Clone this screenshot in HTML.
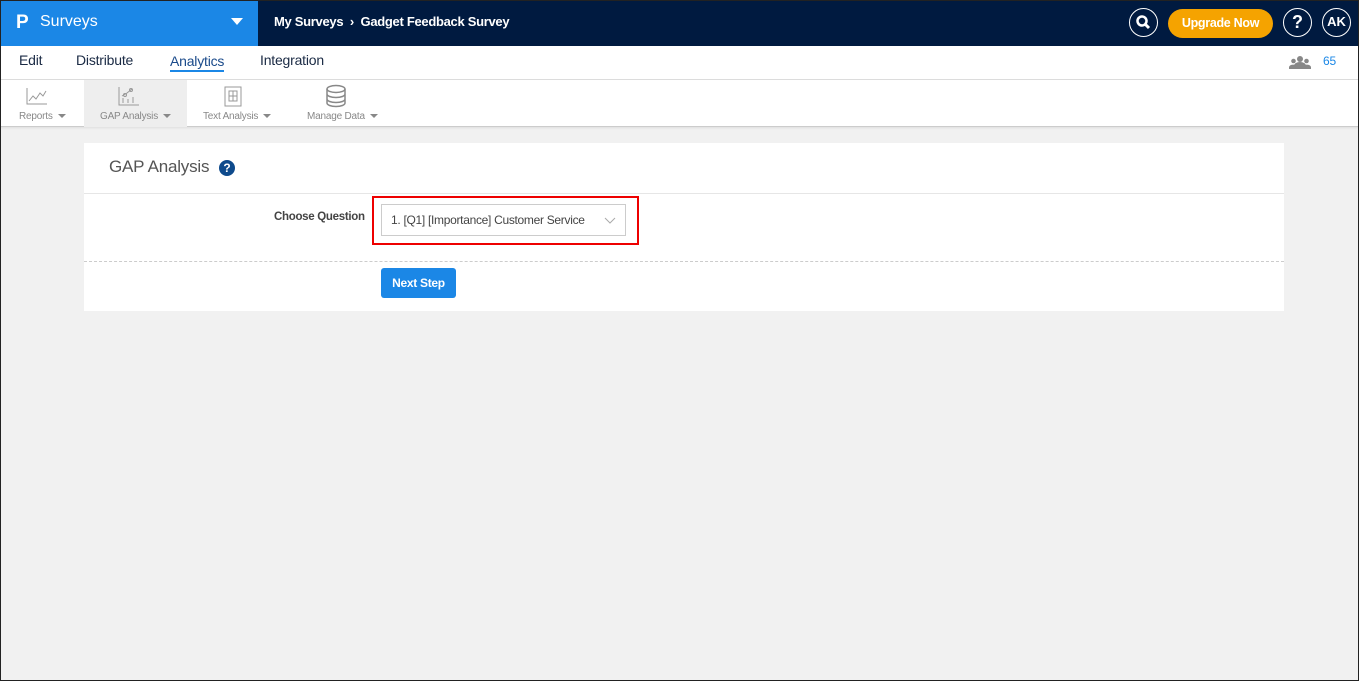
<!DOCTYPE html>
<html><head><meta charset="utf-8"><style>
*{box-sizing:border-box;margin:0;padding:0}
body{width:1359px;height:681px;overflow:hidden;background:#f1f1f1;font-family:"Liberation Sans",sans-serif;position:relative}
.abs{position:absolute}
.top{left:0;top:0;width:1359px;height:46px;background:#001a40}
.brand{left:0;top:0;width:258px;height:46px;background:#1b87e6;color:#fff}
.nav{left:0;top:46px;width:1359px;height:34px;background:#fff;border-bottom:1px solid #ddd}
.nav span{position:absolute;top:6px;font-size:14px;color:#1a2a44;letter-spacing:-0.2px}
.tool{left:0;top:80px;width:1359px;height:47px;background:#fff;border-bottom:1px solid #ccc;box-shadow:0 1px 2px #ddd}
.tl{position:absolute;top:31px;font-size:10px;color:#888;letter-spacing:-0.2px}
.car{display:inline-block;border-left:4px solid transparent;border-right:4px solid transparent;border-top:4px solid #888;margin-left:5px;vertical-align:middle}
.card{left:84px;top:143px;width:1200px;height:168px;background:#fff}
.frame{left:0;top:0;width:1359px;height:681px;border:1px solid #222;pointer-events:none}
</style></head><body>
<div class="abs top"></div>
<div class="abs brand">
 <div class="abs" style="left:16px;top:12px;font-size:19px;font-weight:bold">P</div>
 <div class="abs" style="left:40px;top:13px;font-size:16px">Surveys</div>
 <div class="abs" style="left:231px;top:18px;border-left:6px solid transparent;border-right:6px solid transparent;border-top:7px solid #fff"></div>
</div>
<div class="abs" style="left:274px;top:14px;color:#fff;font-size:13px;font-weight:bold;letter-spacing:-0.3px">My Surveys &nbsp;›&nbsp; Gadget Feedback Survey</div>
<div class="abs" style="left:1129px;top:8px;width:29px;height:29px;border:1.5px solid #fff;border-radius:50%">
 <svg width="26" height="26" viewBox="0 0 26 26"><circle cx="12" cy="12" r="4.5" stroke="#fff" stroke-width="2.5" fill="none"/><path d="M15 15l4 4" stroke="#fff" stroke-width="3"/></svg></div>
<div class="abs" style="left:1168px;top:9px;width:105px;height:29px;background:#f5a300;border-radius:15px;color:#fff;font-size:12.5px;font-weight:bold;text-align:center;line-height:29px;letter-spacing:-0.3px">Upgrade Now</div>
<div class="abs" style="left:1283px;top:8px;width:29px;height:29px;border:1.5px solid #fff;border-radius:50%;color:#fff;font-weight:bold;font-size:18px;text-align:center;line-height:26px">?</div>
<div class="abs" style="left:1322px;top:8px;width:29px;height:29px;border:1.5px solid #fff;border-radius:50%;color:#fff;font-weight:bold;font-size:13px;text-align:center;line-height:26px">AK</div>
<div class="abs nav">
 <span style="left:19px">Edit</span><span style="left:76px">Distribute</span>
 <span style="left:170px;color:#1a4a8a;border-bottom:2px solid #1b87e6;line-height:18px">Analytics</span>
 <span style="left:260px">Integration</span>
 <svg class="abs" style="left:1289px;top:9px" width="22" height="14" viewBox="0 0 22 14"><circle cx="11" cy="4" r="3" fill="#888"/><circle cx="4.5" cy="6" r="2.3" fill="#888"/><circle cx="17.5" cy="6" r="2.3" fill="#888"/><path d="M5 14v-3a6 4 0 0 1 12 0v3z" fill="#888"/><path d="M0 14v-2a4 3 0 0 1 6-2v4zM22 14v-2a4 3 0 0 0-6-2v4z" fill="#888"/></svg>
 <span style="left:1323px;top:8px;font-size:12px;color:#1b87e6">65</span>
</div>
<div class="abs tool">
 <div class="abs" style="left:84px;top:0;width:103px;height:47px;background:#eee"></div>
 <svg class="abs" style="left:25px;top:6px" width="24" height="20"><path d="M2 2v16h20M4 15l4-5 3 3 4-6 3 3 3-5" stroke="#999" fill="none"/></svg>
 <svg class="abs" style="left:117px;top:5px" width="24" height="22"><path d="M2 2v18h20M6 18v-5M11 18v-4M16 18v-6M5 11l5-3 5-4" stroke="#999" fill="none"/><circle cx="8" cy="10" r="1.5" stroke="#999" fill="none"/><circle cx="14" cy="5" r="1.5" stroke="#999" fill="none"/></svg>
 <svg class="abs" style="left:222px;top:5px" width="22" height="22"><rect x="3" y="2" width="16" height="19" stroke="#999" fill="none"/><rect x="7" y="6" width="8" height="10" stroke="#999" fill="none"/><path d="M11 6v10M7 11h8" stroke="#999"/></svg>
 <svg class="abs" style="left:325px;top:4px" width="22" height="24"><ellipse cx="11" cy="5" rx="9" ry="3.5" stroke="#888" stroke-width="1.5" fill="none"/><path d="M2 5v14c0 2 4 3.5 9 3.5s9-1.5 9-3.5V5M2 10c0 2 4 3.5 9 3.5s9-1.5 9-3.5M2 15c0 2 4 3.5 9 3.5s9-1.5 9-3.5" stroke="#888" stroke-width="1.5" fill="none"/></svg>
 <span class="tl" style="left:19px">Reports<i class="car"></i></span>
 <span class="tl" style="left:100px">GAP Analysis<i class="car"></i></span>
 <span class="tl" style="left:203px">Text Analysis<i class="car"></i></span>
 <span class="tl" style="left:307px">Manage Data<i class="car"></i></span>
</div>
<div class="abs card">
 <div class="abs" style="left:25px;top:14px;font-size:17px;color:#555;letter-spacing:-0.2px">GAP Analysis</div>
 <div class="abs" style="left:135px;top:17px;width:16px;height:16px;border-radius:50%;background:#0e4a8c;color:#fff;font-size:12px;font-weight:bold;text-align:center;line-height:16px">?</div>
 <div class="abs" style="left:0;top:50px;width:1200px;border-top:1px solid #e6e6e6"></div>
 <div class="abs" style="left:190px;top:68px;font-size:11.5px;font-weight:bold;color:#444;letter-spacing:-0.3px">Choose Question</div>
 <div class="abs" style="left:288px;top:53px;width:267px;height:49px;border:2px solid #e00"></div>
 <div class="abs" style="left:297px;top:61px;width:245px;height:32px;border:1px solid #ccc;font-size:12px;color:#444;line-height:30px;padding-left:9px;letter-spacing:-0.3px">1. [Q1] [Importance] Customer Service
  <svg class="abs" style="left:222px;top:12px" width="12" height="8"><path d="M1 1l5 5 5-5" stroke="#aaa" fill="none"/></svg></div>
 <div class="abs" style="left:0;top:118px;width:1200px;border-top:1px dashed #ccc"></div>
 <div class="abs" style="left:297px;top:125px;width:75px;height:30px;background:#1b87e6;border-radius:3px;color:#fff;font-size:12px;font-weight:bold;text-align:center;line-height:30px;letter-spacing:-0.3px">Next Step</div>
</div>
<div class="abs frame"></div>
</body></html>
